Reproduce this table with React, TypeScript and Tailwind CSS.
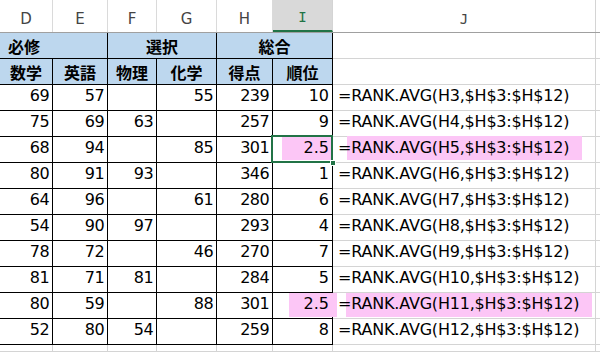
const widths = [53, 55, 49, 60, 56, 60]
const letters = ['D', 'E', 'F', 'G', 'H', 'I']

type Row = {
  n: number
  d: number
  e: number
  f?: number
  g?: number
  h: number
  rank: string
}

const rows: Row[] = [
  { n: 3, d: 69, e: 57, g: 55, h: 239, rank: '10' },
  { n: 4, d: 75, e: 69, f: 63, h: 257, rank: '9' },
  { n: 5, d: 68, e: 94, g: 85, h: 301, rank: '2.5' },
  { n: 6, d: 80, e: 91, f: 93, h: 346, rank: '1' },
  { n: 7, d: 64, e: 96, g: 61, h: 280, rank: '6' },
  { n: 8, d: 54, e: 90, f: 97, h: 293, rank: '4' },
  { n: 9, d: 78, e: 72, g: 46, h: 270, rank: '7' },
  { n: 10, d: 81, e: 71, f: 81, h: 284, rank: '5' },
  { n: 11, d: 80, e: 59, g: 88, h: 301, rank: '2.5' },
  { n: 12, d: 52, e: 80, f: 54, h: 259, rank: '8' },
]

const jp = { fontFamily: '"Noto Sans CJK JP", "Noto Sans", sans-serif' }
const num = { fontFamily: '"DejaVu Sans", Verdana, sans-serif' }

function NumCell({ w, value }: { w: number; value?: number }) {
  return (
    <div
      className="flex h-full items-center justify-end border-r border-b border-black pr-[3px] pb-[3px] text-[16px] tracking-[-0.6px] text-black"
      style={{ width: w, ...num }}
    >
      {value ?? ''}
    </div>
  )
}

export default function App() {
  return (
    <div className="h-[352px] w-[600px] overflow-hidden bg-white">
      {/* column letters */}
      <div className="flex h-[33px] border-b border-[#a0a0a0]">
        {letters.map((l, i) =>
          l === 'I' ? (
            <div
              key={l}
              className="flex items-center justify-center border-b-2 border-r border-b-[#217346] border-r-[#d4d4d4] bg-[#d9d9d9] pt-[5px] text-[14px] text-[#217346]"
              style={{ width: widths[i], fontFamily: '"DejaVu Sans Mono", monospace' }}
            >
              I
            </div>
          ) : (
            <div
              key={l}
              className="flex items-center justify-center border-r border-[#dadada] pt-[6px] text-[15px] text-[#444]"
              style={{ width: widths[i], ...num }}
            >
              {l}
            </div>
          )
        )}
        <div
          className="flex w-[263px] items-center justify-center border-r border-[#d4d4d4] pt-[6px] text-[14px] text-[#444]"
          style={{ fontFamily: '"DejaVu Sans Mono", monospace' }}
        >
          J
        </div>
        <div className="flex-1" />
      </div>

      {/* group headings */}
      <div className="flex h-[26px] text-[16px] font-bold text-black" style={jp}>
        <div className="flex w-[108px] items-center border-r border-b border-black bg-[#bdd7ee] pl-[8px]">
          必修
        </div>
        <div className="flex w-[109px] items-center justify-center border-r border-b border-black bg-[#bdd7ee]">
          選択
        </div>
        <div className="flex w-[116px] items-center justify-center border-r border-b border-black bg-[#bdd7ee]">
          総合
        </div>
        <div className="w-[263px] border-r border-b border-[#d4d4d4]" />
        <div className="flex-1 border-b border-[#d4d4d4]" />
      </div>

      {/* subject headings */}
      <div className="flex h-[26px] text-[16px] font-bold text-black" style={jp}>
        {['数学', '英語', '物理', '化学', '得点', '順位'].map((t, i) => (
          <div
            key={t}
            className="flex items-center justify-center border-r border-b border-black bg-[#bdd7ee]"
            style={{ width: widths[i] }}
          >
            {t}
          </div>
        ))}
        <div className="w-[263px] border-r border-b border-[#d4d4d4]" />
        <div className="flex-1 border-b border-[#d4d4d4]" />
      </div>

      {rows.map((r) => {
        const marked = r.rank === '2.5'
        const selected = r.n === 5
        return (
          <div key={r.n} className="flex h-[26px]">
            <NumCell w={53} value={r.d} />
            <NumCell w={55} value={r.e} />
            <NumCell w={49} value={r.f} />
            <NumCell w={60} value={r.g} />
            <NumCell w={56} value={r.h} />
            <div
              className="relative flex h-full w-[60px] items-center justify-end border-r border-b border-black pr-[3px] pb-[3px] text-[16px] text-black"
              style={num}
            >
              {marked && (
                <div
                  className={
                    selected
                      ? 'absolute top-0 right-0 bottom-[2px] left-[9px] bg-[#fcc6f6]'
                      : 'absolute top-0 -right-[5px] bottom-[1px] left-[16px] z-10 bg-[#fcc6f6]'
                  }
                />
              )}
              <span className="relative z-20">{r.rank}</span>
              {selected && (
                <>
                  <div className="absolute -top-[2px] -right-[1px] -bottom-[1px] -left-[2px] z-20 border-2 border-[#217346]" />
                  <div className="absolute -right-[4px] -bottom-[4px] z-30 h-[6px] w-[6px] border border-white bg-[#217346]" />
                </>
              )}
            </div>
            <div
              className="relative flex w-[263px] items-center border-r border-b border-[#d4d4d4] pl-[5px] pb-[3px] text-[16px] tracking-[-0.2px] text-black"
              style={num}
            >
              {marked && (
                <div
                  className={
                    selected
                      ? 'absolute -top-px right-[13px] bottom-[2px] left-[14px] bg-[#fcc6f6]'
                      : 'absolute top-0 right-[3px] bottom-[1px] left-[13px] bg-[#fcc6f6]'
                  }
                />
              )}
              <span className="relative">{`=RANK.AVG(H${r.n},$H$3:$H$12)`}</span>
            </div>
            <div className="flex-1 border-b border-[#d4d4d4]" />
          </div>
        )
      })}

      {/* empty row below the table */}
      <div className="flex h-[7px]">
        {widths.map((w, i) => (
          <div key={i} className="border-r border-b border-[#d4d4d4]" style={{ width: w }} />
        ))}
        <div className="w-[263px] border-r border-b border-[#d4d4d4]" />
        <div className="flex-1 border-b border-[#d4d4d4]" />
      </div>
    </div>
  )
}
